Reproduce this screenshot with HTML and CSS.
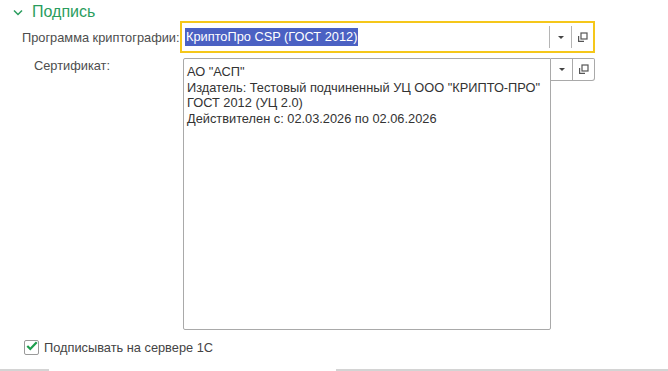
FILE: index.html
```html
<!DOCTYPE html>
<html lang="ru">
<head>
    <meta charset="UTF-8">
    <link rel="stylesheet" href="styles.css">
</head>
<body>
<div class="form">
    <div class="group-header">
        <svg class="chevron" width="10" height="7" viewBox="0 0 10 7"><path d="M1 1.5 L5 5.5 L9 1.5" fill="none" stroke="#2a9d5e" stroke-width="1.5"/></svg>
        <span class="group-title">Подпись</span>
    </div>

    <div class="row row-program">
        <span class="label">Программа криптографии:</span>
        <div class="combo combo-focused">
            <div class="combo-text"><span class="selected">КриптоПро CSP (ГОСТ 2012)</span></div>
            <div class="btn"><span class="arrow-down"></span></div>
            <div class="btn">
                <svg width="11" height="11" viewBox="0 0 11 11"><rect x="4" y="1" width="6" height="6" fill="none" stroke="#555" stroke-width="1.2"/><path d="M1.6 4 V9.4 H7" fill="none" stroke="#555" stroke-width="1.2"/></svg>
            </div>
        </div>
    </div>

    <div class="row row-cert">
        <span class="label label-cert">Сертификат:</span>
        <div class="memo">АО "АСП"
Издатель: Тестовый подчиненный УЦ ООО "КРИПТО-ПРО"
ГОСТ 2012 (УЦ 2.0)
Действителен с: 02.03.2026 по 02.06.2026</div>
        <div class="memo-buttons">
            <div class="btn"><span class="arrow-down"></span></div>
            <div class="btn">
                <svg width="11" height="11" viewBox="0 0 11 11"><rect x="4" y="1" width="6" height="6" fill="none" stroke="#555" stroke-width="1.2"/><path d="M1.6 4 V9.4 H7" fill="none" stroke="#555" stroke-width="1.2"/></svg>
            </div>
        </div>
    </div>

    <label class="check-row">
        <span class="checkbox">
            <svg width="14" height="12" viewBox="0 0 14 12"><path d="M1.5 6 L5 9.5 L12.5 1.5" fill="none" stroke="#1e9e4e" stroke-width="2.6"/></svg>
        </span>
        <span class="check-label">Подписывать на сервере 1С</span>
    </label>
</div>
<div class="bottom-bar"><div class="bottom-tab"></div></div>
</body>
</html>
```

FILE: styles.css
```css
body {
    margin: 0;
    font-family: "Liberation Sans", Arial, sans-serif;
    font-size: 12.8px;
    color: #4d4d4d;
    background: #fff;
    height: 371px;
    position: relative;
    overflow: hidden;
}

.form {
    display: flex;
    flex-direction: column;
}

.group-header {
    display: flex;
    align-items: center;
    height: 22px;
    padding-left: 13px;
    margin-top: 1px;
}

.chevron {
    margin-right: 9px;
    margin-top: 1px;
}

.group-title {
    font-size: 16px;
    color: #2a9d5e;
}

.row {
    display: flex;
}

.row-program {
    margin-top: -2px;
    align-items: center;
}

.label {
    flex-shrink: 0;
    padding-left: 22px;
    width: 180px;
    box-sizing: border-box;
    white-space: nowrap;
}

.label-cert {
    padding-left: 34px;
    width: 183px;
}

.combo {
    flex-shrink: 0;
    display: flex;
    width: 415px;
    height: 32px;
    box-sizing: border-box;
    border: 2px solid #f5c71a;
}

.combo-text {
    flex: 1;
    display: flex;
    align-items: center;
    padding-left: 3px;
    border-right: 1px solid #b5b5b5;
    margin: 3px 0;
}

.selected {
    background: #4b61c3;
    color: #fff;
    line-height: 18px;
    padding: 0 1px;
}

.btn {
    width: 21px;
    display: flex;
    align-items: center;
    justify-content: center;
}

.combo .btn + .btn {
    border-left: 1px solid #b5b5b5;
    margin: 3px 0;
}

.arrow-down {
    width: 0;
    height: 0;
    border-left: 3px solid transparent;
    border-right: 3px solid transparent;
    border-top: 3px solid #444;
}

.row-cert {
    margin-top: 5px;
    align-items: flex-start;
}

.memo {
    flex-shrink: 0;
    width: 368px;
    height: 272px;
    box-sizing: border-box;
    border: 1px solid #a9a9a9;
    border-radius: 2px 0 2px 2px;
    padding: 5px 3px;
    white-space: pre-line;
    line-height: 15.6px;
    color: #333;
}

.memo-buttons {
    display: flex;
    height: 23px;
    box-sizing: border-box;
    border: 1px solid #a9a9a9;
    border-left: none;
    border-radius: 0 2px 3px 0;
}

.memo-buttons .btn + .btn {
    border-left: 1px solid #a9a9a9;
}

.check-row {
    display: flex;
    align-items: center;
    padding-left: 24px;
    margin-top: 10px;
}

.checkbox {
    width: 15px;
    height: 15px;
    box-sizing: border-box;
    border: 1px solid #9a9a9a;
    border-radius: 2px;
    display: flex;
    align-items: flex-start;
    justify-content: center;
    margin-right: 5px;
}

.checkbox svg {
    margin-top: -1px;
    margin-left: 1px;
}

.check-label {
    color: #444;
}

.bottom-bar {
    position: absolute;
    left: 0;
    right: 0;
    bottom: 0;
    height: 2px;
    background: #d4d4d4;
}

.bottom-tab {
    margin-left: 49px;
    width: 287px;
    height: 2px;
    background: #fff;
}
```
